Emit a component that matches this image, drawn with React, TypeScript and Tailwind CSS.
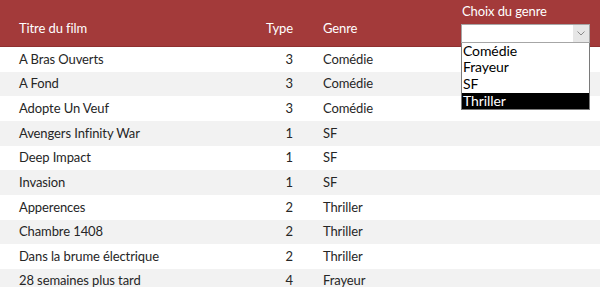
const films = [
  { titre: "A Bras Ouverts", type: 3, genre: "Comédie" },
  { titre: "A Fond", type: 3, genre: "Comédie" },
  { titre: "Adopte Un Veuf", type: 3, genre: "Comédie" },
  { titre: "Avengers Infinity War", type: 1, genre: "SF" },
  { titre: "Deep Impact", type: 1, genre: "SF" },
  { titre: "Invasion", type: 1, genre: "SF" },
  { titre: "Apperences", type: 2, genre: "Thriller" },
  { titre: "Chambre 1408", type: 2, genre: "Thriller" },
  { titre: "Dans la brume électrique", type: 2, genre: "Thriller" },
  { titre: "28 semaines plus tard", type: 4, genre: "Frayeur" },
];

const genres = ["Comédie", "Frayeur", "SF", "Thriller"];

function GenrePicker() {
  return (
    <div className="absolute left-[461px] top-[2px] w-[129px]">
      <div className="pl-[1px] text-[13px] text-white">Choix du genre</div>
      <div className="mt-[2px] flex h-[19px] border border-[#a6a6a6] bg-white">
        <div className="flex-1" />
        <div className="flex w-[16px] items-center justify-center bg-[#e6e6e6]">
          <svg width="8" height="5" viewBox="0 0 8 5" fill="none">
            <path d="M0.5 0.5 L4 4 L7.5 0.5" stroke="#8a8a8a" strokeWidth="1" />
          </svg>
        </div>
      </div>
      <ul className="border border-t-0 border-[#7a7a7a] bg-white text-[14px] leading-[16.7px] text-black">
        {genres.map((g) => (
          <li
            key={g}
            className={
              g === "Thriller" ? "bg-black pl-[1px] text-white" : "pl-[1px]"
            }
          >
            {g}
          </li>
        ))}
      </ul>
    </div>
  );
}

export default function App() {
  return (
    <div className="relative h-[287px] w-[600px] overflow-hidden bg-white font-['Lato',sans-serif] text-[13px] tracking-[-0.1px]">
      <div className="grid h-[47px] grid-cols-[226px_48px_1fr] items-end border-b border-[#8f3030] bg-[#a33a3a] px-[19px] pb-[8px] text-white">
        <span>Titre du film</span>
        <span className="text-right">Type</span>
        <span className="pl-[30px]">Genre</span>
      </div>
      {films.map((f, i) => (
        <div
          key={f.titre}
          className={
            "grid h-[24.67px] grid-cols-[226px_48px_1fr] items-center px-[19px] text-[#262626] " +
            (i % 2 === 1 ? "bg-[#f2f2f2]" : "bg-white")
          }
        >
          <span>{f.titre}</span>
          <span className="text-right">{f.type}</span>
          <span className="pl-[30px]">{f.genre}</span>
        </div>
      ))}
      <GenrePicker />
    </div>
  );
}
